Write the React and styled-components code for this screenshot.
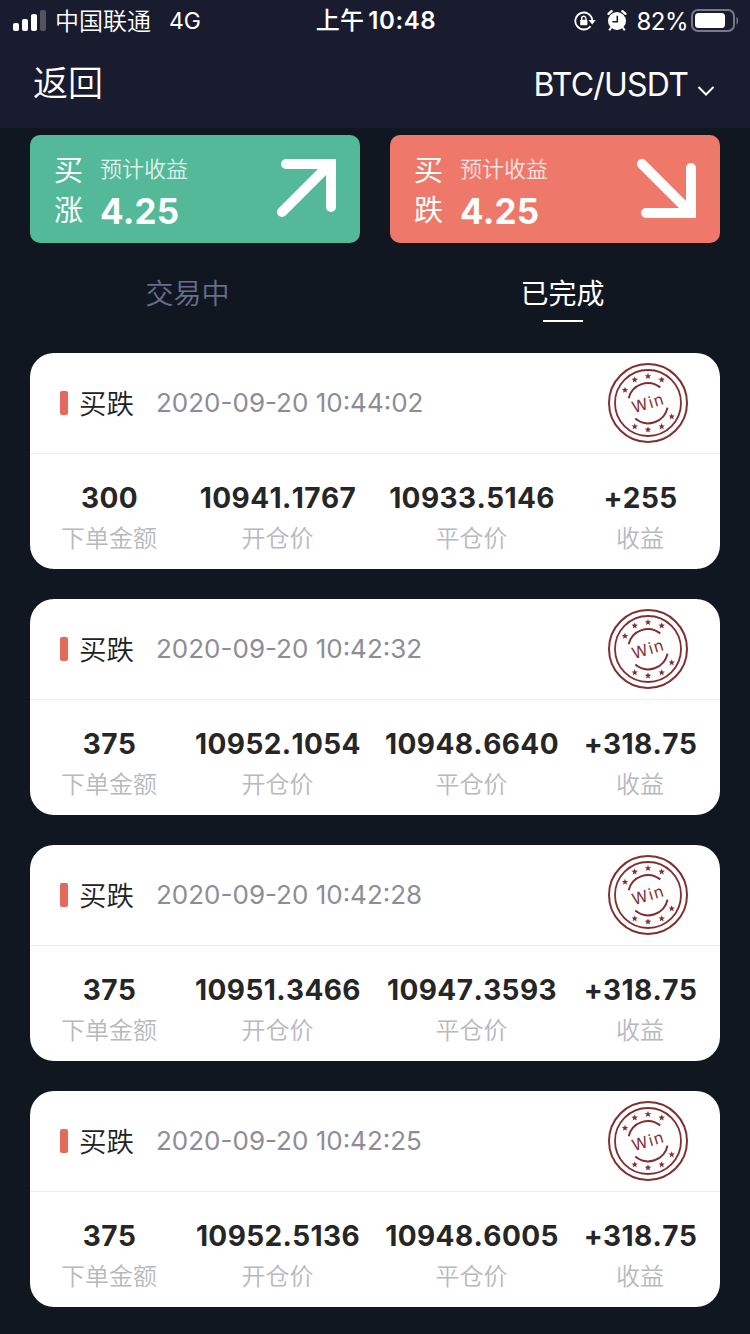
import React from 'react';
import styled, { createGlobalStyle } from 'styled-components';

const colors = {
  page: '#101721',
  bar: '#191b2e',
  green: '#53b998',
  red: '#ee786a',
  marker: '#e3695c',
  stamp: '#7f2f30',
  white: '#ffffff',
};

const GlobalStyle = createGlobalStyle`
  * {
    box-sizing: border-box;
  }
  body {
    margin: 0;
    background: ${colors.page};
    font-family: Inter, 'Noto Sans CJK SC', sans-serif;
  }
`;

const Screen = styled.div`
  width: 750px;
  height: 1334px;
  overflow: hidden;
  background: ${colors.page};
`;

const StatusBar = styled.header`
  display: grid;
  grid-template-columns: 1fr auto 1fr;
  align-items: center;
  height: 40px;
  padding: 0 11px 0 13px;
  background: ${colors.bar};
  color: ${colors.white};
  font-size: 24px;
  line-height: 42px;
`;

const StatusGroup = styled.div`
  display: flex;
  align-items: center;
  justify-content: ${({ $end }) => ($end ? 'flex-end' : 'flex-start')};
  height: 40px;
`;

const Carrier = styled.span`
  margin-left: 9px;
  padding-top: 2px;
  font-weight: 350;
`;

const Network = styled.span`
  margin-left: 18px;
  font-size: 23px;
`;

const Clock = styled.time`
  font-size: 24px;
  font-weight: 500;
  line-height: 42px;
  letter-spacing: 0.2px;

  b {
    margin-left: 4px;
    font-weight: 600;
    letter-spacing: 0.6px;
  }
`;

const Battery = styled.span`
  margin: 0 3px 0 9px;
  padding-top: 1px;
  font-size: 24px;
  letter-spacing: -0.5px;
`;

const AlarmIcon = styled.svg`
  margin-left: 11px;
`;

const NavBar = styled.nav`
  display: flex;
  align-items: center;
  justify-content: space-between;
  height: 88px;
  padding: 0 35px 0 33px;
  background: ${colors.bar};
  color: ${colors.white};
`;

const BackButton = styled.a`
  font-size: 35px;
  font-weight: 350;
  line-height: 88px;
  padding-bottom: 2px;
`;

const PairPicker = styled.a`
  display: flex;
  align-items: center;
  font-size: 32px;
  letter-spacing: -0.8px;

  svg {
    margin: 14px 0 0 9px;
  }
`;

const Actions = styled.section`
  display: grid;
  grid-template-columns: 1fr 1fr;
  gap: 30px;
  padding: 7px 30px 0;
`;

const ActionButton = styled.div`
  display: flex;
  align-items: center;
  height: 108px;
  padding: 0 22px 0 24px;
  border-radius: 10px;
  background: ${({ $color }) => $color};
  color: ${colors.white};
`;

const ActionName = styled.div`
  width: 29px;
  padding-top: 3px;
  font-size: 29px;
  line-height: 40px;
`;

const Expected = styled.div`
  flex: 1;
  margin-left: 17px;
  padding-top: 8px;
`;

const ExpectedLabel = styled.div`
  height: 36px;
  font-size: 22px;
  font-weight: 350;
  line-height: 32px;
  opacity: 0.8;
`;

const ExpectedValue = styled.div`
  font-size: 35px;
  font-weight: 700;
  line-height: 44px;
  letter-spacing: 0.2px;
`;

const Tabs = styled.div`
  display: grid;
  grid-template-columns: 1fr 1fr;
  height: 110px;
`;

const Tab = styled.div`
  display: flex;
  flex-direction: column;
  align-items: center;
  padding-top: 31px;
  color: ${({ $active }) => ($active ? colors.white : '#6b6d8c')};
  font-size: 28px;
  font-weight: ${({ $active }) => ($active ? 400 : 350)};
  line-height: 40px;

  &::after {
    content: '';
    width: 40px;
    height: 2px;
    margin-top: 6px;
    background: ${({ $active }) => ($active ? colors.white : 'transparent')};
  }
`;

const OrderList = styled.main`
  display: flex;
  flex-direction: column;
  gap: 30px;
  padding: 0 30px;
`;

const OrderCard = styled.article`
  height: 216px;
  border-radius: 24px;
  background: ${colors.white};
`;

const OrderHeader = styled.div`
  display: flex;
  align-items: center;
  height: 101px;
  padding: 0 32px 0 30px;
  border-bottom: 1px solid #ececec;
`;

const Marker = styled.i`
  width: 8px;
  height: 24px;
  border-radius: 2px;
  background: ${colors.marker};
`;

const Direction = styled.span`
  margin-left: 11px;
  padding-top: 2px;
  color: #222;
  font-size: 27.5px;
  font-weight: 350;
  line-height: 40px;
`;

const OrderTime = styled.time`
  flex: 1;
  margin-left: 22px;
  padding-bottom: 1px;
  color: #8d8d95;
  font-size: 26px;
`;

const OrderBody = styled.dl`
  display: grid;
  grid-template-columns: 143px 194px 194px 143px;
  justify-content: center;
  margin: 0;
  padding-top: 23px;
`;

const Field = styled.div`
  display: flex;
  flex-direction: column-reverse;
  align-items: center;
`;

const FieldLabel = styled.dt`
  padding-right: 1px;
  color: #b8b8bd;
  font-size: 24px;
  font-weight: 350;
  line-height: 40px;
`;

const FieldValue = styled.dd`
  margin: 0;
  color: #262626;
  font-size: 28px;
  font-weight: 700;
  line-height: 42px;
  letter-spacing: 0.4px;
  font-kerning: none;
  white-space: nowrap;
`;

const orders = [
  { time: '2020-09-20 10:44:02', amount: '300', open: '10941.1767', close: '10933.5146', profit: '+255' },
  { time: '2020-09-20 10:42:32', amount: '375', open: '10952.1054', close: '10948.6640', profit: '+318.75' },
  { time: '2020-09-20 10:42:28', amount: '375', open: '10951.3466', close: '10947.3593', profit: '+318.75' },
  { time: '2020-09-20 10:42:25', amount: '375', open: '10952.5136', close: '10948.6005', profit: '+318.75' },
];

const stars = [
  [-23, -13],
  [-13.3, -23.3],
  [0, -26.7],
  [13.7, -23.3],
  [-13.3, 23.6],
  [0, 26.7],
  [13.7, 23.6],
  [23.7, 13.6],
];

const WinStamp = () => (
  <svg width="80" height="80" viewBox="-40 -40 80 80" fill="none" stroke={colors.stamp} strokeWidth="2">
    <circle r="39" />
    <circle r="33" strokeWidth="1.8" />
    <path d="M-19.3-4.8A19.8 19.8 0 0 1 12.3-15.6M-12.7 15.6A19.8 19.8 0 0 0 19.5 4.6" />
    {stars.map(([x, y]) => (
      <path
        key={`${x},${y}`}
        transform={`translate(${x} ${y})`}
        d="M0-3.3.9-1.1 3.2-1 1.4.5 2 2.8 0 1.5-2 2.8-1.4.5-3.2-1-.9-1.1Z"
        fill={colors.stamp}
        stroke="none"
      />
    ))}
    <text
      x="0.2"
      y="5.8"
      transform="rotate(-17)"
      textAnchor="middle"
      fontFamily="Inter, sans-serif"
      fontSize="16"
      letterSpacing="1.4"
      fill={colors.stamp}
      stroke="none"
    >
      Win
    </text>
  </svg>
);

const Signal = () => (
  <svg width="33" height="22" viewBox="0 0 33 22" fill="#fff">
    <rect x="0" y="13" width="6" height="8" rx="2" />
    <rect x="9" y="9" width="6" height="12" rx="2" />
    <rect x="18" y="4" width="6" height="17" rx="2" />
    <rect x="27" y="0" width="6" height="21" rx="2" opacity="0.25" />
  </svg>
);

const RotationLock = () => (
  <svg width="22" height="20" viewBox="0 0 22 20" fill="none" stroke="#fff" strokeWidth="1.8">
    <path d="M16.6 15.2A8.5 8.5 0 1 1 18.3 9" />
    <path d="M14.6 9h7.2l-3.6 4.4Z" fill="#fff" stroke="none" />
    <rect x="6.2" y="8.8" width="7.2" height="5.4" rx="0.8" fill="#fff" stroke="none" />
    <path d="M7.7 9V7.4a2.1 2.1 0 0 1 4.2 0V9" strokeWidth="1.4" />
  </svg>
);

const Alarm = () => (
  <AlarmIcon width="20" height="22" viewBox="0 0 20 22">
    <circle cx="10" cy="11" r="9" fill="#fff" />
    <path d="M1.5 3.8 4.6 1.2M15.4 1.2l3.1 2.6" stroke="#fff" strokeWidth="2.4" strokeLinecap="round" />
    <path d="m4.2 17.5-2 2.8M15.8 17.5l2 2.8" stroke="#fff" strokeWidth="2" />
    <path d="M10.3 5.8v6H5.4" stroke={colors.bar} strokeWidth="1.5" fill="none" />
  </AlarmIcon>
);

const BatteryIcon = () => (
  <svg width="48" height="24" viewBox="0 0 48 24" fill="none">
    <rect x="1" y="1" width="42" height="21" rx="6" stroke="#77788a" strokeWidth="2" />
    <rect x="4" y="4" width="30" height="15" rx="3.5" fill="#fff" />
    <path d="M45.5 8c2.2.8 2.2 6.6 0 7.4Z" fill="#77788a" />
  </svg>
);

const ArrowUp = () => (
  <svg width="62" height="62" viewBox="0 0 62 62" fill="none" stroke="#fff" strokeWidth="10" strokeLinecap="round">
    <path d="M6 54 52 8M10 6H55V49" />
  </svg>
);

const ArrowDown = () => (
  <svg width="62" height="62" viewBox="0 0 62 62" fill="none" stroke="#fff" strokeWidth="10" strokeLinecap="round">
    <path d="M6 6 52 52M10 55H55V10" />
  </svg>
);

const Action = ({ color, name, icon }) => (
  <ActionButton $color={color}>
    <ActionName>{name}</ActionName>
    <Expected>
      <ExpectedLabel>预计收益</ExpectedLabel>
      <ExpectedValue>4.25</ExpectedValue>
    </Expected>
    {icon}
  </ActionButton>
);

const Order = ({ order }) => {
  const fields = [
    ['下单金额', order.amount],
    ['开仓价', order.open],
    ['平仓价', order.close],
    ['收益', order.profit],
  ];

  return (
    <OrderCard>
      <OrderHeader>
        <Marker />
        <Direction>买跌</Direction>
        <OrderTime>{order.time}</OrderTime>
        <WinStamp />
      </OrderHeader>
      <OrderBody>
        {fields.map(([label, value]) => (
          <Field key={label}>
            <FieldLabel>{label}</FieldLabel>
            <FieldValue>{value}</FieldValue>
          </Field>
        ))}
      </OrderBody>
    </OrderCard>
  );
};

export default function App() {
  return (
    <Screen>
      <GlobalStyle />
      <StatusBar>
        <StatusGroup>
          <Signal />
          <Carrier>中国联通</Carrier>
          <Network>4G</Network>
        </StatusGroup>
        <Clock>
          上午<b>10:48</b>
        </Clock>
        <StatusGroup $end>
          <RotationLock />
          <Alarm />
          <Battery>82%</Battery>
          <BatteryIcon />
        </StatusGroup>
      </StatusBar>
      <NavBar>
        <BackButton>返回</BackButton>
        <PairPicker>
          BTC/USDT
          <svg width="18" height="12" viewBox="0 0 18 12" fill="none" stroke="#fff" strokeWidth="2">
            <path d="m1.5 2 7.5 7.5L16.5 2" />
          </svg>
        </PairPicker>
      </NavBar>
      <Actions>
        <Action color={colors.green} name="买涨" icon={<ArrowUp />} />
        <Action color={colors.red} name="买跌" icon={<ArrowDown />} />
      </Actions>
      <Tabs>
        <Tab>交易中</Tab>
        <Tab $active>已完成</Tab>
      </Tabs>
      <OrderList>
        {orders.map((order) => (
          <Order key={order.time} order={order} />
        ))}
      </OrderList>
    </Screen>
  );
}
